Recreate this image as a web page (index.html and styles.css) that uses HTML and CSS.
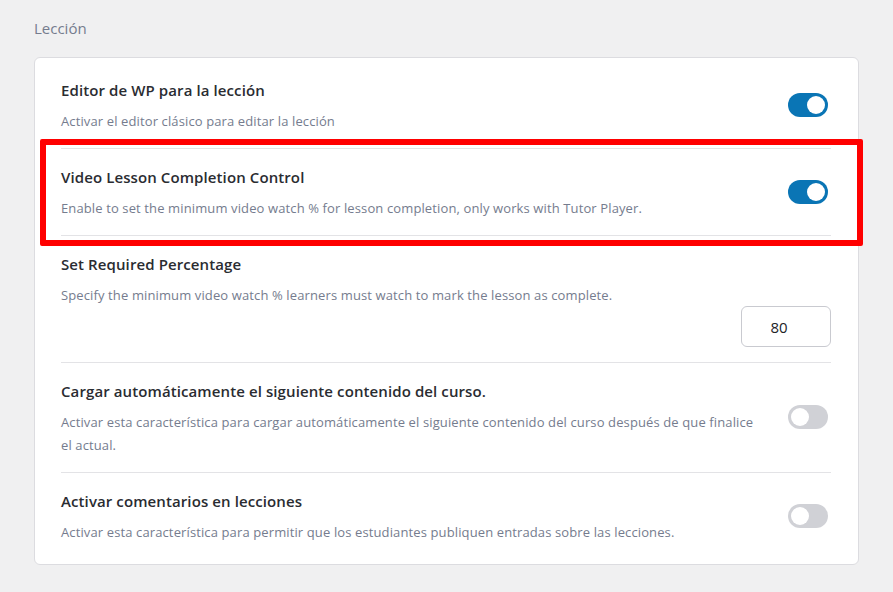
FILE: index.html
```html
<!DOCTYPE html>
<html lang="es">
<head>
    <meta charset="UTF-8">
    <meta name="viewport" content="width=device-width, initial-scale=1.0">
    <title>Lección - Ajustes</title>
    <link rel="stylesheet" href="styles.css">
</head>
<body>

    <div class="settings">
        <h2 class="section-title">Lección</h2>

        <div class="card">
            <div class="row">
                <div class="row-text">
                    <div class="row-title">Editor de WP para la lección</div>
                    <div class="row-desc">Activar el editor clásico para editar la lección</div>
                </div>
                <span class="toggle on"></span>
            </div>

            <div class="row">
                <div class="row-text">
                    <div class="row-title">Video Lesson Completion Control</div>
                    <div class="row-desc">Enable to set the minimum video watch % for lesson completion, only works with Tutor Player.</div>
                </div>
                <span class="toggle on"></span>
            </div>

            <div class="row row-stack">
                <div class="row-text">
                    <div class="row-title">Set Required Percentage</div>
                    <div class="row-desc">Specify the minimum video watch % learners must watch to mark the lesson as complete.</div>
                </div>
                <input class="number" type="text" value="80">
            </div>

            <div class="row">
                <div class="row-text">
                    <div class="row-title">Cargar automáticamente el siguiente contenido del curso.</div>
                    <div class="row-desc">Activar esta característica para cargar automáticamente el siguiente contenido del curso después de que finalice el actual.</div>
                </div>
                <span class="toggle"></span>
            </div>

            <div class="row">
                <div class="row-text">
                    <div class="row-title">Activar comentarios en lecciones</div>
                    <div class="row-desc">Activar esta característica para permitir que los estudiantes publiquen entradas sobre las lecciones.</div>
                </div>
                <span class="toggle"></span>
            </div>
        </div>

        <!-- annotation box -->
        <div class="highlight"></div>
    </div>

</body>
</html>
```

FILE: styles.css
```css
body {
    background-color: #f0f0f1;
    font-family: 'Open Sans', 'Noto Sans', sans-serif;
    margin: 0;
    padding: 0;
}

.settings {
    position: relative;
    padding: 17px 34px 27px 34px;
    width: 825px;
}

.section-title {
    font-size: 15px;
    font-weight: 400;
    line-height: 22px;
    color: #757c8e;
    margin: 0 0 18px 0;
}

.card {
    background-color: #fff;
    border: 1px solid #dcdce0;
    border-radius: 6px;
    padding: 4px 27px 5px 26px;
}

.row {
    display: flex;
    align-items: center;
    gap: 30px;
    padding: 18px 0 15px 0;
    border-bottom: 1px solid #e3e3e6;
}

.row:last-child {
    border-bottom: none;
}

.row-text {
    flex: 1;
}

.row-title {
    font-size: 15px;
    font-weight: 600;
    line-height: 20px;
    color: #2a2c31;
    letter-spacing: 0.1px;
    margin-bottom: 10px;
}

.row-desc {
    font-size: 13px;
    line-height: 23px;
    color: #757c8e;
    letter-spacing: 0.12px;
}

.row-stack {
    flex-direction: column;
    align-items: stretch;
    gap: 0;
}

.number {
    align-self: flex-end;
    width: 90px;
    height: 41px;
    box-sizing: border-box;
    border: 1px solid #c9cad0;
    border-radius: 6px;
    font-family: 'Open Sans', 'Noto Sans', sans-serif;
    font-size: 15px;
    color: #212327;
    text-align: center;
    padding: 0 14px 0 0;
    margin-top: -1px;
}

/* switch */
.toggle {
    position: relative;
    flex: none;
    width: 40px;
    height: 24px;
    border-radius: 12px;
    background-color: #d0d1d6;
    margin-right: 3px;
    margin-top: -4px;
}

.toggle::after {
    content: '';
    position: absolute;
    top: 3px;
    left: 3px;
    width: 18px;
    height: 18px;
    border-radius: 50%;
    background-color: #fff;
}

.toggle.on {
    background-color: #0a75b5;
}

.toggle.on::after {
    left: 19px;
}

.highlight {
    position: absolute;
    left: 40px;
    top: 139px;
    width: 811px;
    height: 95px;
    border: 6px solid #ff0000;
    border-radius: 2px;
}
```
